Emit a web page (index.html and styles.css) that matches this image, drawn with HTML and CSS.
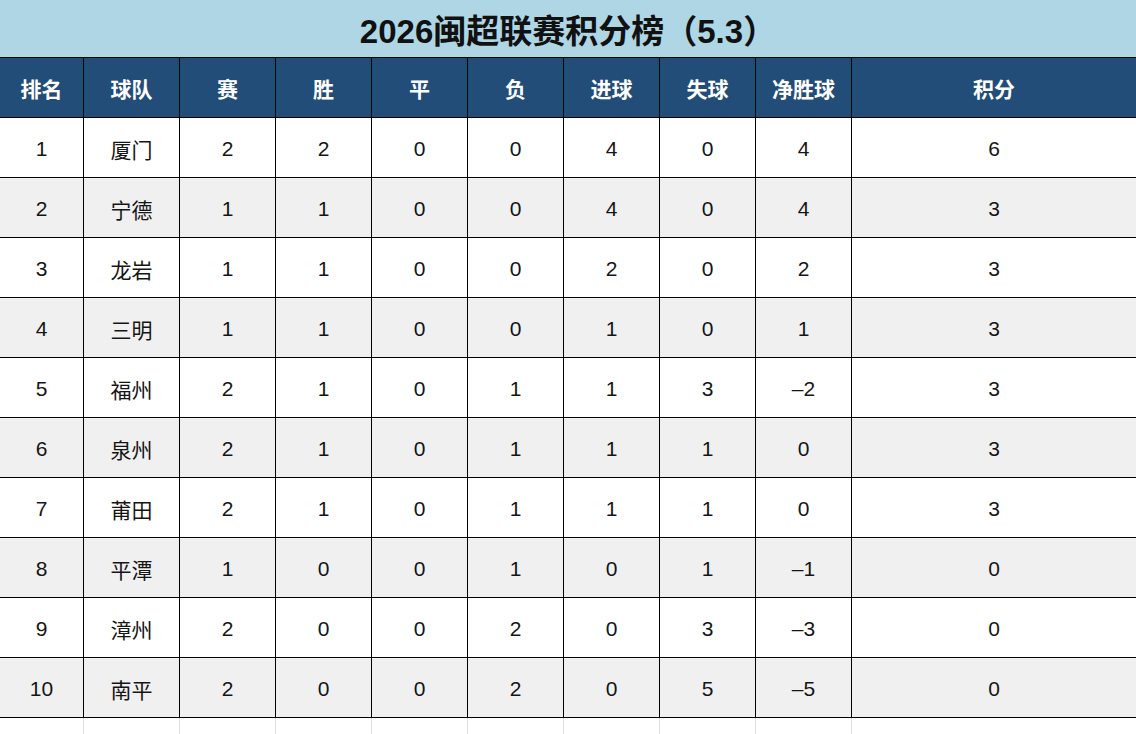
FILE: index.html
```html
<!DOCTYPE html>
<html lang="zh-CN">
<head>
<meta charset="utf-8">
<title>2026闽超联赛积分榜</title>
<link rel="stylesheet" href="styles.css">
</head>
<body>
<div class="title">2026闽超联赛积分榜（5.3）</div>
<div class="table">
  <div class="row head">
    <div class="cell">排名</div><div class="cell">球队</div><div class="cell">赛</div><div class="cell">胜</div><div class="cell">平</div><div class="cell">负</div><div class="cell">进球</div><div class="cell">失球</div><div class="cell">净胜球</div><div class="cell">积分</div>
  </div>
  <div class="row"><div class="cell">1</div><div class="cell">厦门</div><div class="cell">2</div><div class="cell">2</div><div class="cell">0</div><div class="cell">0</div><div class="cell">4</div><div class="cell">0</div><div class="cell">4</div><div class="cell">6</div></div>
  <div class="row alt"><div class="cell">2</div><div class="cell">宁德</div><div class="cell">1</div><div class="cell">1</div><div class="cell">0</div><div class="cell">0</div><div class="cell">4</div><div class="cell">0</div><div class="cell">4</div><div class="cell">3</div></div>
  <div class="row"><div class="cell">3</div><div class="cell">龙岩</div><div class="cell">1</div><div class="cell">1</div><div class="cell">0</div><div class="cell">0</div><div class="cell">2</div><div class="cell">0</div><div class="cell">2</div><div class="cell">3</div></div>
  <div class="row alt"><div class="cell">4</div><div class="cell">三明</div><div class="cell">1</div><div class="cell">1</div><div class="cell">0</div><div class="cell">0</div><div class="cell">1</div><div class="cell">0</div><div class="cell">1</div><div class="cell">3</div></div>
  <div class="row"><div class="cell">5</div><div class="cell">福州</div><div class="cell">2</div><div class="cell">1</div><div class="cell">0</div><div class="cell">1</div><div class="cell">1</div><div class="cell">3</div><div class="cell">–2</div><div class="cell">3</div></div>
  <div class="row alt"><div class="cell">6</div><div class="cell">泉州</div><div class="cell">2</div><div class="cell">1</div><div class="cell">0</div><div class="cell">1</div><div class="cell">1</div><div class="cell">1</div><div class="cell">0</div><div class="cell">3</div></div>
  <div class="row"><div class="cell">7</div><div class="cell">莆田</div><div class="cell">2</div><div class="cell">1</div><div class="cell">0</div><div class="cell">1</div><div class="cell">1</div><div class="cell">1</div><div class="cell">0</div><div class="cell">3</div></div>
  <div class="row alt"><div class="cell">8</div><div class="cell">平潭</div><div class="cell">1</div><div class="cell">0</div><div class="cell">0</div><div class="cell">1</div><div class="cell">0</div><div class="cell">1</div><div class="cell">–1</div><div class="cell">0</div></div>
  <div class="row"><div class="cell">9</div><div class="cell">漳州</div><div class="cell">2</div><div class="cell">0</div><div class="cell">0</div><div class="cell">2</div><div class="cell">0</div><div class="cell">3</div><div class="cell">–3</div><div class="cell">0</div></div>
  <div class="row alt"><div class="cell">10</div><div class="cell">南平</div><div class="cell">2</div><div class="cell">0</div><div class="cell">0</div><div class="cell">2</div><div class="cell">0</div><div class="cell">5</div><div class="cell">–5</div><div class="cell">0</div></div>
  <div class="row empty"><div class="cell"></div><div class="cell"></div><div class="cell"></div><div class="cell"></div><div class="cell"></div><div class="cell"></div><div class="cell"></div><div class="cell"></div><div class="cell"></div><div class="cell"></div></div>
</div>
</body>
</html>
```

FILE: styles.css
```css
html, body {
  margin: 0;
  padding: 0;
  background: #ffffff;
  overflow: hidden;
}
body {
  width: 1136px;
  height: 734px;
  font-family: "Liberation Sans", "Noto Sans CJK SC", sans-serif;
  color: #151515;
}
.title {
  height: 57px;
  background: #aed6e5;
  display: flex;
  align-items: center;
  justify-content: center;
  font-family: "Liberation Sans", "Noto Sans CJK SC", sans-serif;
  font-weight: 700;
  font-size: 33px;
  color: #111;
  padding-top: 0;
  box-sizing: border-box;
}
.table {
  display: flex;
  flex-direction: column;
}
.row {
  display: grid;
  grid-template-columns: 84px repeat(8, 96px) 1fr;
  height: 60px;
  border-bottom: 1px solid #000;
  box-sizing: border-box;
  background: #ffffff;
}
.row.alt {
  background: #f0f0f0;
}
.row.head {
  height: 61px;
  border-top: 1px solid #000;
  background: #214d78;
  color: #ffffff;
  font-weight: 700;
}
.cell {
  display: flex;
  align-items: center;
  justify-content: center;
  border-right: 1px solid #000;
  font-size: 21px;
  padding-top: 3px;
  box-sizing: border-box;
}
.row.head .cell {
  font-size: 21px;
  padding-top: 0;
}
.cell:last-child {
  border-right: none;
}
.row.empty {
  height: 16px;
  border-bottom: none;
}
.row.empty .cell {
  border-right-color: #dedede;
}
.row.empty .cell:last-child {
  border-right: none;
}
```
